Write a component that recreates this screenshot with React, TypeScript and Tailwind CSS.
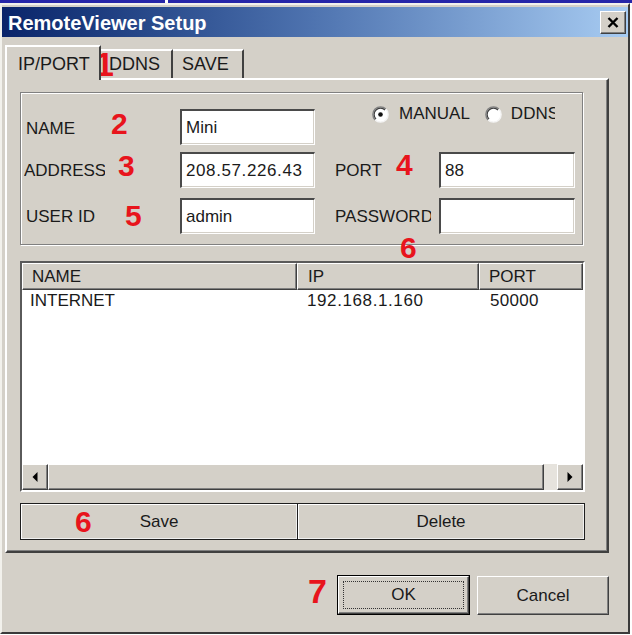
const raised = 'border-t border-l border-t-white border-l-white border-r border-b border-r-[#404040] border-b-[#404040] shadow-[inset_-1px_-1px_0_#808080]'
const sunken = 'border-t-2 border-l-2 border-t-[#4a4a4a] border-l-[#4a4a4a] border-r border-b border-r-white border-b-white shadow-[inset_-1px_-1px_0_#d4d0c8]'

function Radio({ checked }: { checked?: boolean }) {
    return (
        <svg width="17" height="17" viewBox="0 0 17 17">
            <circle cx="8.5" cy="8.5" r="7.6" fill="#fff" />
            <path d="M3.1 13.9 A7.6 7.6 0 0 1 13.9 3.1" stroke="#808080" strokeWidth="1.4" fill="none" />
            <path d="M4 13 A6.3 6.3 0 0 1 13 4" stroke="#404040" strokeWidth="1.2" fill="none" />
            <path d="M13.9 3.1 A7.6 7.6 0 0 1 3.1 13.9" stroke="#f4f4f4" strokeWidth="1.4" fill="none" />
            {checked && <circle cx="8.5" cy="8.5" r="2.3" fill="#111" />}
        </svg>
    )
}

function Field({ value, w }: { value?: string; w: string }) {
    return <div className={`flex h-[36px] items-center bg-white pl-[4px] ${w} ${sunken}`}>{value}</div>
}

function Label({ text, w, pl }: { text: string; w: string; pl: string }) {
    return (
        <div className={pl}>
            <div className={`overflow-hidden whitespace-nowrap ${w}`}>{text}</div>
        </div>
    )
}

function Arrow({ dir }: { dir: 'left' | 'right' }) {
    return (
        <div className={`flex h-full w-[26px] items-center justify-center bg-[#d4d0c8] ${raised}`}>
            <svg width="6" height="10" viewBox="0 0 6 10">
                <polygon points={dir === 'left' ? '5.5,0 5.5,10 0.5,5' : '0.5,0 0.5,10 5.5,5'} fill="#000" />
            </svg>
        </div>
    )
}

const marks = [
    { n: '1', c: 'left-[95px] top-[47px] text-[34px]' },
    { n: '2', c: 'left-[111px] top-[109px] text-[30px]' },
    { n: '3', c: 'left-[118px] top-[151px] text-[30px]' },
    { n: '4', c: 'left-[396px] top-[150px] text-[30px]' },
    { n: '5', c: 'left-[125px] top-[201px] text-[30px]' },
    { n: '6', c: 'left-[400px] top-[233px] text-[30px]' },
    { n: '6', c: 'left-[75px] top-[507px] text-[30px]' },
    { n: '7', c: 'left-[308px] top-[574px] text-[34px]' },
]

export default function App() {
    return (
        <div className="relative h-[635px] w-[632px] overflow-hidden bg-white font-['Liberation_Sans',Arial,sans-serif] text-[17px] leading-[18px] text-[#1a1a1a]">
            <div className="flex h-[3px]">
                <div className="w-[165px] bg-[#2626a8]" />
                <div className="w-[3px] bg-white" />
                <div className="flex-1 bg-[#2626a8]" />
            </div>
            <div className="flex h-[631px] w-[630px] flex-col border-2 border-t-[#f2f1ec] border-l-[#f2f1ec] border-r-[#3a3a3a] border-b-[#3a3a3a] bg-[#d4d0c8]">
                {/* title bar */}
                <div className="mt-[2px] flex h-[30px] items-center justify-between bg-linear-to-r from-[#0a246a] via-[#4f74b0] to-[#a8ccf2] pl-[6px] pr-[2px]">
                    <span className="mt-[2px] text-[20px] font-bold leading-none text-white">RemoteViewer Setup</span>
                    <div className={`flex h-[23px] w-[26px] items-center justify-center bg-[#d4d0c8] ${raised}`}>
                        <svg width="12" height="11" viewBox="0 0 12 11">
                            <path d="M1.5 1 L10.5 10 M10.5 1 L1.5 10" stroke="#000" strokeWidth="2.4" />
                        </svg>
                    </div>
                </div>

                {/* tabs */}
                <div className="relative z-10 -mb-[2px] ml-[3px] mt-[8px] flex h-[35px] items-start text-[18px]">
                    <div className="h-[35px] w-[96px] border-t-2 border-l-2 border-r-2 border-t-white border-l-white border-r-[#404040] bg-[#d4d0c8] pl-[11px] pt-[8px]">
                        IP/PORT
                    </div>
                    <div className="mt-[4px] h-[29px] w-[72px] border-t-2 border-r-2 border-t-white border-r-[#404040] pl-[8px] pt-[4px]">
                        DDNS
                    </div>
                    <div className="mt-[4px] h-[29px] w-[71px] border-t-2 border-r-2 border-t-white border-r-[#404040] pl-[9px] pt-[4px]">
                        SAVE
                    </div>
                </div>

                {/* tab panel */}
                <div className="ml-[3px] flex h-[475px] w-[604px] flex-col border-2 border-t-white border-l-white border-r-[#404040] border-b-[#404040] pl-[13px] pt-[12px] shadow-[inset_-1px_-1px_0_#808080]">
                    {/* group box */}
                    <div className="flex h-[153px] w-[563px] flex-col border border-[#808080] pt-[16px] shadow-[1px_1px_0_#fff,inset_1px_1px_0_#fff]">
                        <div className="flex h-[36px] items-center">
                            <Label text="NAME" w="w-[81px] mt-[3px]" pl="w-[159px] pl-[5px]" />
                            <Field value="Mini" w="w-[135px]" />
                            <div className="-mt-[4px] ml-[57px] flex h-[18px] items-center self-start">
                                <Radio checked />
                                <span className="ml-[10px]">MANUAL</span>
                                <div className="ml-[15px]">
                                    <Radio />
                                </div>
                                <span className="ml-[9px] w-[44px] overflow-hidden whitespace-nowrap">DDNS</span>
                            </div>
                        </div>
                        <div className="mt-[7px] flex h-[36px] items-center">
                            <Label text="ADDRESS" w="w-[81px] mt-[2px]" pl="w-[159px] pl-[3px]" />
                            <Field value="208.57.226.43" w="w-[135px] tracking-[0.6px]" />
                            <Label text="PORT" w="w-[96px] mt-[2px]" pl="w-[124px] pl-[20px]" />
                            <Field value="88" w="w-[136px]" />
                        </div>
                        <div className="mt-[10px] flex h-[36px] items-center">
                            <Label text="USER ID" w="w-[81px] mt-[2px]" pl="w-[159px] pl-[5px]" />
                            <Field value="admin" w="w-[135px]" />
                            <Label text="PASSWORD" w="w-[96px] mt-[2px]" pl="w-[124px] pl-[20px]" />
                            <Field w="w-[136px]" />
                        </div>
                    </div>

                    {/* list view */}
                    <div className="mt-[16px] flex h-[231px] w-[565px] flex-col border-2 border-t-[#5a5a5a] border-l-[#5a5a5a] border-r-white border-b-white bg-white">
                        <div className="flex h-[27px]">
                            <div className={`flex w-[275px] items-center bg-[#d4d0c8] pl-[9px] ${raised}`}>NAME</div>
                            <div className={`flex w-[182px] items-center bg-[#d4d0c8] pl-[10px] ${raised}`}>IP</div>
                            <div className={`flex flex-1 items-center bg-[#d4d0c8] pl-[9px] ${raised}`}>PORT</div>
                        </div>
                        <div className="flex h-[22px] items-center">
                            <div className="w-[275px] pl-[8px]">INTERNET</div>
                            <div className="w-[182px] pl-[10px] tracking-[0.6px]">192.168.1.160</div>
                            <div className="flex-1 pl-[11px] tracking-[0.3px]">50000</div>
                        </div>
                        <div className="flex-1" />
                        <div className="flex h-[26px]">
                            <Arrow dir="left" />
                            <div className={`w-[496px] bg-[#d4d0c8] ${raised}`} />
                            <div className="flex-1 bg-[#e6e3dd]" />
                            <Arrow dir="right" />
                        </div>
                    </div>

                    {/* save / delete */}
                    <div className="mt-[11px] flex h-[37px] w-[565px] border border-[#1e1e1e]">
                        <div className="flex w-[277px] items-center justify-center border-r border-r-[#1e1e1e] shadow-[inset_1px_1px_0_#fff,inset_-1px_-1px_0_#f0f0f0]">
                            Save
                        </div>
                        <div className="flex flex-1 items-center justify-center shadow-[inset_1px_1px_0_#fff,inset_-1px_-1px_0_#f0f0f0]">
                            Delete
                        </div>
                    </div>
                </div>

                {/* ok / cancel */}
                <div className="mt-[22px] flex items-end justify-end gap-[7px] pr-[19px]">
                    <div className="h-[40px] w-[133px] border border-black">
                        <div className={`flex h-full w-full items-center justify-center p-[4px] ${raised}`}>
                            <div className="flex h-full w-full items-center justify-center border border-dotted border-[#333]">OK</div>
                        </div>
                    </div>
                    <div className={`flex h-[39px] w-[132px] items-center justify-center ${raised}`}>Cancel</div>
                </div>
            </div>

            {marks.map((m, i) => (
                <span key={i} className={`absolute font-bold leading-none text-[#e8141c] ${m.c}`}>
                    {m.n}
                </span>
            ))}
        </div>
    )
}
